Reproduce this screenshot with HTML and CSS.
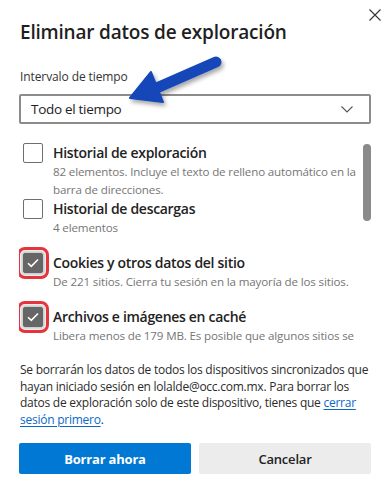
FILE: index.html
```html
<!DOCTYPE html>
<html lang="es">
<head>
    <meta charset="UTF-8">
    <meta name="viewport" content="width=device-width, initial-scale=1.0">
    <title>Eliminar datos de exploración</title>
    <link rel="stylesheet" href="styles.css">
</head>
<body>
    <div class="dialog">
        <div class="header">
            <h1 class="title">Eliminar datos de exploración</h1>
            <button class="close" aria-label="Cerrar">
                <svg width="12" height="12" viewBox="0 0 12 12"><path d="M0.5 0.5 L11.5 11.5 M11.5 0.5 L0.5 11.5" stroke="#333" stroke-width="1.1" fill="none"/></svg>
            </button>
        </div>

        <div class="label">Intervalo de tiempo</div>
        <div class="select">
            <span>Todo el tiempo</span>
            <svg width="12" height="7" viewBox="0 0 12 7"><path d="M0.5 0.5 L6 6 L11.5 0.5" stroke="#555" stroke-width="1.1" fill="none"/></svg>
        </div>

        <div class="scroll">
            <ul class="options">
                <li class="option">
                    <span class="box"></span>
                    <div class="text">
                        <div class="name">Historial de exploración</div>
                        <div class="desc">82 elementos. Incluye el texto de relleno automático en la barra de direcciones.</div>
                    </div>
                </li>
                <li class="option second">
                    <span class="box"></span>
                    <div class="text">
                        <div class="name">Historial de descargas</div>
                        <div class="desc">4 elementos</div>
                    </div>
                </li>
                <li class="option marked">
                    <span class="box checked">
                        <svg width="12" height="10" viewBox="0 0 12 10"><path d="M1 5.2 L4.3 8.4 L11 1.5" stroke="#fff" stroke-width="1.6" fill="none"/></svg>
                    </span>
                    <div class="text">
                        <div class="name">Cookies y otros datos del sitio</div>
                        <div class="desc">De 221 sitios. Cierra tu sesión en la mayoría de los sitios.</div>
                    </div>
                </li>
                <li class="option marked">
                    <span class="box checked">
                        <svg width="12" height="10" viewBox="0 0 12 10"><path d="M1 5.2 L4.3 8.4 L11 1.5" stroke="#fff" stroke-width="1.6" fill="none"/></svg>
                    </span>
                    <div class="text">
                        <div class="name">Archivos e imágenes en caché</div>
                        <div class="desc">Libera menos de 179 MB. Es posible que algunos sitios se</div>
                    </div>
                </li>
            </ul>
            <div class="scrollbar"></div>
        </div>

        <p class="note">Se borrarán los datos de todos los dispositivos sincronizados que hayan iniciado sesión en lolalde@occ.com.mx. Para borrar los datos de exploración solo de este dispositivo, tienes que <a href="#">cerrar sesión primero</a>.</p>

        <div class="actions">
            <button class="btn primary">Borrar ahora</button>
            <button class="btn">Cancelar</button>
        </div>
    </div>

    <!-- blue annotation arrow drawn over the dialog -->
    <svg class="arrow" width="390" height="492" viewBox="0 0 390 492">
        <defs>
            <filter id="shadow" x="-20%" y="-20%" width="140%" height="140%">
                <feDropShadow dx="2" dy="3" stdDeviation="2" flood-color="#000" flood-opacity="0.35"/>
            </filter>
        </defs>
        <g filter="url(#shadow)" fill="#1346b8" stroke="#1346b8">
            <path d="M216 62 L152 90" stroke-width="11" stroke-linecap="round"/>
            <path d="M130 98 L151 72 L163 102 Z" stroke-width="2" stroke-linejoin="round"/>
        </g>
    </svg>
</body>
</html>
```

FILE: styles.css
```css
body {
    margin: 0;
    background: #fff;
    font-family: 'Open Sans', 'Noto Sans', sans-serif;
    color: #1b1b1b;
}

.dialog {
    width: 390px;
    height: 492px;
    box-sizing: border-box;
    padding: 9px 19px 0 19px;
}

.header {
    display: flex;
    justify-content: space-between;
    align-items: flex-start;
}

.title {
    margin: 9px 0 0 1px;
    font-size: 19px;
    font-weight: 600;
    line-height: 28px;
    letter-spacing: -0.2px;
    color: #1f1f1f;
}

.close {
    border: none;
    background: none;
    padding: 0;
    margin-right: -10px;
    width: 12px;
    height: 12px;
    display: flex;
}

.label {
    margin: 22px 0 0 1px;
    font-size: 12px;
    line-height: 18px;
    letter-spacing: -0.1px;
    color: #333;
}

.select {
    margin-top: 8px;
    height: 30px;
    box-sizing: border-box;
    border: 2px solid #8c8c8c;
    border-radius: 2px;
    display: flex;
    align-items: center;
    justify-content: space-between;
    padding: 0 16px 0 10px;
    font-size: 13.5px;
    letter-spacing: -0.3px;
    color: #222;
}

.scroll {
    margin-top: 19px;
    height: 203px;
    overflow: hidden;
    display: flex;
    align-items: flex-start;
}

.options {
    list-style: none;
    margin: 0;
    padding: 0;
    flex: 1;
}

.option {
    display: flex;
    gap: 10px;
    padding-left: 4px;
}

.option.marked {
    margin-top: 16px;
}

.box {
    flex: none;
    width: 20px;
    height: 20px;
    box-sizing: border-box;
    border: 1px solid #6f6f6f;
    border-radius: 2px;
    display: flex;
    align-items: center;
    justify-content: center;
}

.box.checked {
    background: #666;
    border-color: #666;
    outline: 3px solid #e6343e;
    outline-offset: 3px;
    box-shadow: 0 0 3px 2px rgba(0, 0, 0, 0.22);
}

.text {
    min-width: 0;
}

.name {
    font-size: 14px;
    font-weight: 600;
    line-height: 20px;
    letter-spacing: -0.3px;
    color: #222;
}

.desc {
    font-size: 11.6px;
    line-height: 18px;
    letter-spacing: -0.15px;
    color: #767676;
}

.scrollbar {
    flex: none;
    width: 8px;
    height: 77px;
    margin: 1px 0 0 6px;
    border-radius: 4px;
    background: #8a8a8a;
}

.note {
    margin: 16px 0 0 1px;
    font-size: 12px;
    line-height: 16.5px;
    letter-spacing: -0.25px;
    color: #2b2b2b;
}

.note a {
    color: #0b68c7;
    text-decoration: underline;
    text-underline-offset: 2px;
}

.actions {
    margin-top: 15px;
    display: flex;
    gap: 8px;
}

.btn {
    flex: 1;
    height: 31px;
    border: none;
    border-radius: 2px;
    background: #ececec;
    font-family: inherit;
    font-size: 13px;
    font-weight: 600;
    letter-spacing: -0.2px;
    color: #222;
}

.btn.primary {
    background: #0078d4;
    color: #fff;
    font-weight: 700;
}

.arrow {
    position: absolute;
    left: 0;
    top: 0;
    pointer-events: none;
}
```
